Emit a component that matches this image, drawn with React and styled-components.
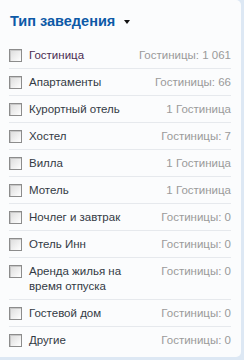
import React from "react";
import styled, { createGlobalStyle } from "styled-components";

const Global = createGlobalStyle`
  html, body { margin: 0; padding: 0; background: #dde8f4; }
  body { font-family: "Liberation Sans", Arial, sans-serif; }
`;

const Panel = styled.div`
  box-sizing: border-box;
  width: 241px;
  height: 357px;
  background: #fbfcfd;
  border-radius: 0 5px 5px 0;
  padding: 0 10px 0 9px;
`;

const Header = styled.div`
  height: 42px;
  display: flex;
  align-items: center;
  gap: 9px;
  padding-left: 1px;
`;

const Title = styled.h3`
  margin: 0;
  font-size: 14.5px;
  font-weight: bold;
  color: #0d5aa7;
  line-height: 18px;
`;

const Caret = styled.span`
  width: 0;
  height: 0;
  border-left: 3.5px solid transparent;
  border-right: 3.5px solid transparent;
  border-top: 4px solid #111;
  margin-top: 2px;
`;

const List = styled.ul`
  list-style: none;
  margin: 0;
  padding: 0;
`;

const Row = styled.li`
  display: flex;
  align-items: flex-start;
  padding: 6px 0 5px;
  border-bottom: 1px solid #e6e9ed;
  font-size: 11.5px;
  line-height: 15px;
  &:last-child { border-bottom: none; }
`;

const Box = styled.span`
  box-sizing: border-box;
  flex: none;
  width: 13px;
  height: 13px;
  margin-top: 1px;
  border: 1px solid #8c8c8c;
  background: linear-gradient(135deg, #dcdcdc 0%, #f4f4f4 70%, #ffffff 100%);
  box-shadow: inset 1px 1px 0 #c8c8c8;
`;

const Label = styled.span`
  margin-left: 7px;
  width: 125px;
  color: ${(p) => (p.$visited ? "#4a2d52" : "#333a44")};
`;

const Count = styled.span`
  margin-left: auto;
  color: #9a9a9a;
  white-space: nowrap;
  text-align: right;
`;

const items = [
  ["Гостиница", "Гостиницы: 1 061", true],
  ["Апартаменты", "Гостиницы: 66"],
  ["Курортный отель", "1 Гостиница"],
  ["Хостел", "Гостиницы: 7"],
  ["Вилла", "1 Гостиница"],
  ["Мотель", "1 Гостиница"],
  ["Ночлег и завтрак", "Гостиницы: 0"],
  ["Отель Инн", "Гостиницы: 0"],
  ["Аренда жилья на время отпуска", "Гостиницы: 0"],
  ["Гостевой дом", "Гостиницы: 0"],
  ["Другие", "Гостиницы: 0"],
];

export default function App() {
  return (
    <>
      <Global />
      <Panel>
        <Header>
          <Title>Тип заведения</Title>
          <Caret />
        </Header>
        <List>
          {items.map(([label, count, visited]) => (
            <Row key={label}>
              <Box />
              <Label $visited={visited}>{label}</Label>
              <Count>{count}</Count>
            </Row>
          ))}
        </List>
      </Panel>
    </>
  );
}
